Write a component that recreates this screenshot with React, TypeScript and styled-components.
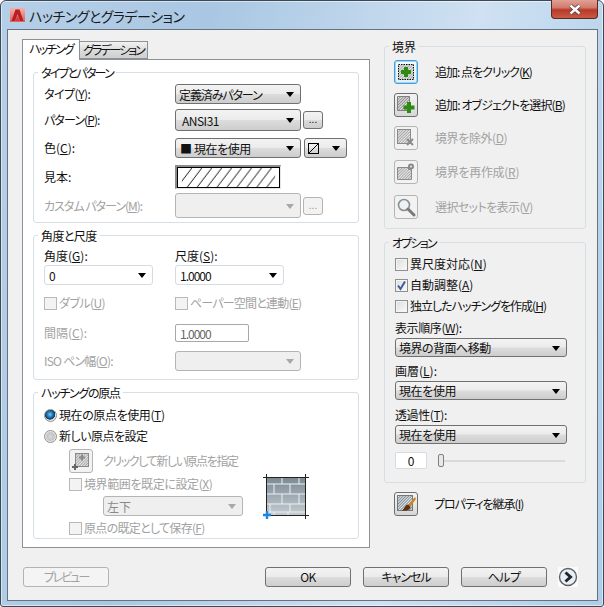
import React from 'react';
import styled, { createGlobalStyle, css } from 'styled-components';

const GlobalStyle = createGlobalStyle`
  html, body { margin: 0; padding: 0; background: #fff; }
  body {
    font-family: "Noto Sans CJK JP", "Liberation Sans", sans-serif;
    font-size: 12px;
    font-feature-settings: "palt";
    color: #111;
  }
  u { text-underline-offset: 1px; }
`;

// kana in the reference font run narrower, so most texts carry their own tracking
const tracking = css<{ $ls?: number }>`
  letter-spacing: ${(p) => p.$ls ?? 0}px;
`;

const Frame = styled.div`
  width: 604px;
  height: 607px;
  box-sizing: border-box;
  border: 1px solid #3c4a58;
  border-radius: 6px 6px 3px 3px;
  padding: 0 5px 5px 6px;
  background: linear-gradient(100deg, #b6cfe8 0%, #a9c7e3 30%, #cfe1f2 68%, #adcde8 100%);
  box-shadow: inset 0 0 0 1px rgba(255, 255, 255, 0.5);
`;

const TitleBar = styled.div`
  height: 28px;
  display: flex;
  align-items: flex-start;
`;

const TitleIcon = styled.svg`
  margin: 7px 4px 0 3px;
`;

const TitleText = styled.div`
  font-size: 14px;
  line-height: 18px;
  letter-spacing: -0.5px;
  margin-top: 6px;
  color: #1a1a1a;
  flex: 1;
`;

const CloseButton = styled.div`
  width: 47px;
  height: 19px;
  margin-top: -1px;
  box-sizing: border-box;
  border: 1px solid #5a2a24;
  border-top: none;
  border-radius: 0 0 4px 4px;
  background: linear-gradient(#e0a196 0%, #d27a6c 42%, #b8392a 55%, #c95c44 100%);
  display: flex;
  align-items: center;
  justify-content: center;
`;

const Client = styled.div`
  height: 572px;
  box-sizing: border-box;
  border: 1px solid #66727e;
  background: #f0f0f0;
  padding: 9px 0 0 14px;
`;

const Columns = styled.div`
  display: flex;
  align-items: flex-start;
`;

const LeftColumn = styled.div`
  width: 348px;
`;

const RightColumn = styled.div`
  width: 202px;
  margin: 7px 0 0 14px;
`;

const Tabs = styled.div`
  display: flex;
  align-items: flex-end;
  height: 21px;
  margin-bottom: -1px;
  position: relative;
`;

const Tab = styled.div<{ $active?: boolean; $ls?: number }>`
  ${tracking}
  box-sizing: border-box;
  border: 1px solid #8a9199;
  text-align: center;
  white-space: nowrap;
  ${(p) =>
    p.$active
      ? css`
          width: 58px;
          height: 21px;
          line-height: 17px;
          background: #fff;
          border-bottom: none;
        `
      : css`
          width: 68px;
          height: 18px;
          line-height: 16px;
          margin-bottom: 1px;
          border-left: none;
          background: linear-gradient(#f2f2f2, #dcdcdc 50%, #cfcfcf);
        `}
`;

const TabPanel = styled.div`
  box-sizing: border-box;
  border: 1px solid #8a9199;
  background: #fff;
  padding: 12px 10px 8px;
`;

const Group = styled.div<{ $mt?: number; $pb?: number }>`
  border: 1px solid #d5dfe5;
  border-radius: 3px;
  margin-top: ${(p) => p.$mt ?? 0}px;
  padding: 0 10px ${(p) => p.$pb ?? 0}px;
`;

const Legend = styled.div<{ $ls?: number }>`
  ${tracking}
  width: fit-content;
  height: 16px;
  line-height: 16px;
  margin: -8px 0 0 -6px;
  padding: 0 3px 0 3px;
  background: #fff;
`;

const RightLegend = styled(Legend)`
  background: #f0f0f0;
`;

const Row = styled.div<{ $h: number; $mt?: number; $gap?: number }>`
  display: flex;
  align-items: center;
  height: ${(p) => p.$h}px;
  margin-top: ${(p) => p.$mt ?? 0}px;
  gap: ${(p) => p.$gap ?? 0}px;
`;

const Label = styled.div<{ $w?: number; $off?: boolean; $ls?: number }>`
  ${tracking}
  width: ${(p) => (p.$w ? `${p.$w}px` : 'auto')};
  white-space: nowrap;
  line-height: 16px;
  color: ${(p) => (p.$off ? '#a2a2a2' : '#111')};
`;

const CheckCell = styled.div<{ $w: number }>`
  display: flex;
  align-items: center;
  width: ${(p) => p.$w}px;
`;

const Select = styled.div<{
  $w: number;
  $off?: boolean;
  $white?: boolean;
  $pl?: number;
  $ml?: number;
  $ls?: number;
}>`
  ${tracking}
  position: relative;
  width: ${(p) => p.$w}px;
  height: 100%;
  margin-left: ${(p) => p.$ml ?? 0}px;
  box-sizing: border-box;
  border: 1px solid ${(p) => (p.$off ? '#b4b4b4' : '#707070')};
  border-radius: 3px;
  padding: 0 0 0 ${(p) => p.$pl ?? 3}px;
  display: flex;
  align-items: center;
  white-space: nowrap;
  background: ${(p) =>
    p.$off ? '#efefef' : 'linear-gradient(#f3f3f3, #ebebeb 48%, #dcdcdc 52%, #cdcdcd)'};
  color: ${(p) => (p.$off ? '#8a8a8a' : '#111')};
  ${(p) =>
    p.$white &&
    css`
      border-color: #d4dbe2;
      background: #fff;
    `}
  &::after {
    content: '';
    position: absolute;
    right: 6px;
    top: 50%;
    margin-top: -2px;
    border-left: 4px solid transparent;
    border-right: 4px solid transparent;
    border-top: 5px solid ${(p) => (p.$off ? '#a8a8a8' : '#000')};
  }
`;

const SmallButton = styled.div<{ $off?: boolean }>`
  width: 20px;
  height: 18px;
  margin-left: 2px;
  box-sizing: border-box;
  border: 1px solid ${(p) => (p.$off ? '#b4b4b4' : '#707070')};
  border-radius: 3px;
  background: ${(p) =>
    p.$off ? '#f2f2f2' : 'linear-gradient(#f3f3f3, #ebebeb 48%, #dcdcdc 52%, #cdcdcd)'};
  color: ${(p) => (p.$off ? '#999' : '#111')};
  text-align: center;
  font-size: 10px;
  line-height: 14px;
`;

const TextInput = styled.div<{ $w: number; $off?: boolean; $center?: boolean; $ls?: number }>`
  ${tracking}
  width: ${(p) => p.$w}px;
  height: 100%;
  box-sizing: border-box;
  border: 1px solid ${(p) => (p.$off ? '#a8a8a8' : '#d4dbe2')};
  border-radius: 2px;
  background: #fff;
  padding: 0 4px;
  display: flex;
  align-items: center;
  justify-content: ${(p) => (p.$center ? 'center' : 'flex-start')};
  color: ${(p) => (p.$off ? '#666' : '#111')};
`;

const BoxMark = styled.div<{ $off?: boolean }>`
  width: 13px;
  height: 13px;
  box-sizing: border-box;
  flex: none;
  margin-right: 2px;
  border: 1px solid ${(p) => (p.$off ? '#b8b8b8' : '#8e8f8f')};
  background: ${(p) => (p.$off ? '#f3f3f3' : 'linear-gradient(135deg, #dcdcdc, #fbfbfb)')};
  box-shadow: inset 0 0 0 1px #f4f4f4;
  display: flex;
  align-items: center;
  justify-content: center;
`;

const RadioMark = styled.div<{ $on?: boolean }>`
  width: 13px;
  height: 13px;
  box-sizing: border-box;
  flex: none;
  margin-right: 2px;
  border-radius: 50%;
  border: 1px solid #8e8f8f;
  background: ${(p) =>
    p.$on
      ? 'radial-gradient(circle at 45% 40%, #7cc4f0 0, #1a6fb0 35%, #10395e 55%, #e8e8e8 62%)'
      : 'radial-gradient(circle, #d8d8d8 0, #c4c4c4 50%, #f0f0f0 70%)'};
`;

const Sample = styled.div`
  width: 106px;
  height: 24px;
  box-sizing: border-box;
  border-top: 2px solid #8c8c8c;
  border-left: 2px solid #8c8c8c;
  border-right: 1px solid #e4e4e4;
  border-bottom: 1px solid #e4e4e4;
`;

const SampleInner = styled.svg`
  display: block;
  width: 103px;
  height: 21px;
  border: 1px solid #000;
  box-sizing: border-box;
`;

const OriginArea = styled.div`
  display: flex;
  align-items: flex-start;
  margin-left: 25px;
`;

const OriginControls = styled.div`
  width: 174px;
`;

const OriginPreview = styled.svg`
  flex: none;
  margin: 29px 0 0 20px;
`;

const Indented = styled(Row)`
  padding-left: 34px;
`;

const IconButton = styled.div<{ $off?: boolean; $focus?: boolean }>`
  width: 24px;
  height: 24px;
  flex: none;
  box-sizing: border-box;
  border: 1px solid ${(p) => (p.$off ? '#b4b4b4' : '#6e6e6e')};
  border-radius: 3px;
  background: ${(p) => (p.$off ? '#f2f2f2' : 'linear-gradient(#f3f3f3, #e8e8e8 50%, #d6d6d6)')};
  display: flex;
  align-items: center;
  justify-content: center;
  ${(p) =>
    p.$focus &&
    css`
      border-color: #3c9fe0;
      box-shadow: inset 0 0 0 1px #9fd4f4;
      background: linear-gradient(#f6fbff, #e4eef6);
    `}
`;

const BoundaryRows = styled.div`
  margin: 5px 0 0 -1px;
  padding-bottom: 9px;
`;

const Slider = styled.div`
  position: relative;
  width: 127px;
  height: 2px;
  margin-left: 11px;
  background: #d8dcd8;
`;

const SliderThumb = styled.div`
  position: absolute;
  left: 0;
  top: -6px;
  width: 6px;
  height: 13px;
  box-sizing: border-box;
  border: 1px solid #808080;
  border-radius: 2px;
  background: #e8e8e8;
`;

const InheritRow = styled(Row)`
  margin-left: 10px;
`;

const Footer = styled.div`
  display: flex;
  align-items: center;
  height: 20px;
  margin: 19px 0 0 1px;
`;

const PushButton = styled.div<{ $off?: boolean; $ml?: number; $ls?: number }>`
  ${tracking}
  width: 86px;
  height: 20px;
  margin-left: ${(p) => p.$ml ?? 0}px;
  box-sizing: border-box;
  border: 1px solid ${(p) => (p.$off ? '#b4b4b4' : '#707070')};
  border-radius: 3px;
  text-align: center;
  line-height: 17px;
  color: ${(p) => (p.$off ? '#a2a2a2' : '#111')};
  background: ${(p) =>
    p.$off ? '#f4f4f4' : 'linear-gradient(#f3f3f3, #ebebeb 48%, #dcdcdc 52%, #cdcdcd)'};
`;

const MoreButton = styled.svg`
  margin-left: 11px;
  flex: none;
  background: #fbfbfb;
`;

const U = ({ children }: { children: React.ReactNode }) => <u>{children}</u>;

function Check({
  label,
  off,
  on,
  ls,
}: {
  label: React.ReactNode;
  off?: boolean;
  on?: boolean;
  ls?: number;
}) {
  return (
    <>
      <BoxMark $off={off}>
        {on && (
          <svg width="11" height="11" viewBox="0 0 11 11">
            <path d="M2 5.5 L4.5 9 L9 1.5" fill="none" stroke="#3f5b9e" strokeWidth="2" />
          </svg>
        )}
      </BoxMark>
      <Label $off={off} $ls={ls}>
        {label}
      </Label>
    </>
  );
}

function HatchDefs({ id, color }: { id: string; color: string }) {
  return (
    <defs>
      <pattern id={id} width="2" height="2" patternUnits="userSpaceOnUse" patternTransform="rotate(45)">
        <rect width="2" height="2" fill="#e8e8e8" />
        <rect width="1" height="2" fill={color} />
      </pattern>
    </defs>
  );
}

function AddPickIcon() {
  return (
    <svg width="18" height="18" viewBox="0 0 18 18">
      <HatchDefs id="h-pick" color="#a4b0a4" />
      <rect x="1.5" y="1.5" width="15" height="15" fill="url(#h-pick)" stroke="#111" strokeDasharray="1.5 1" />
      <path d="M7 4h4v3h3v4h-3v3H7v-3H4V7h3z" fill="#2f8a12" />
    </svg>
  );
}

function AddObjectIcon() {
  return (
    <svg width="20" height="20" viewBox="0 0 20 20">
      <HatchDefs id="h-obj" color="#8c8c8c" />
      <path d="M1.5 1.5h12v14h-12z" fill="url(#h-obj)" stroke="#808080" />
      <path d="M11 7h4v3.5h3.5v4H15V18h-4v-3.5H7.5v-4H11z" fill="#2f8a12" />
    </svg>
  );
}

function ExcludeIcon() {
  return (
    <svg width="20" height="20" viewBox="0 0 20 20">
      <HatchDefs id="h-exc" color="#a8a8a8" />
      <rect x="1.5" y="1.5" width="13" height="14" fill="url(#h-exc)" stroke="#8a8a8a" />
      <path d="M11 11l6 6M17 11l-6 6" stroke="#8a8a8a" strokeWidth="2" />
    </svg>
  );
}

function RecreateIcon() {
  return (
    <svg width="20" height="20" viewBox="0 0 20 20">
      <HatchDefs id="h-rec" color="#a8a8a8" />
      <path d="M1.5 5.5h11v2h3v10h-14z" fill="url(#h-rec)" stroke="#8a8a8a" />
      <circle cx="15" cy="4.5" r="3" fill="#8a8a8a" />
      <circle cx="15" cy="4.5" r="1" fill="#eee" />
    </svg>
  );
}

function MagnifierIcon() {
  return (
    <svg width="20" height="20" viewBox="0 0 20 20">
      <circle cx="8" cy="8" r="5.5" fill="#eef2f4" stroke="#8a8f92" strokeWidth="1.6" />
      <path d="M12 12l6 6" stroke="#7a7a7a" strokeWidth="3" strokeLinecap="round" />
    </svg>
  );
}

function BrushIcon() {
  return (
    <svg width="20" height="20" viewBox="0 0 20 20">
      <HatchDefs id="h-brush" color="#7c8e98" />
      <rect x="1.5" y="1.5" width="15" height="15" fill="url(#h-brush)" stroke="#777" />
      <path d="M19 3 L12 11 L14 13 L20 5z" fill="#c9861c" />
      <path d="M12 10.5 C9 11 9 14 6 16.5 C10 17.5 14 16 14.5 13z" fill="#5e2f12" />
    </svg>
  );
}

function OriginPickIcon() {
  return (
    <svg width="20" height="20" viewBox="0 0 20 20">
      <HatchDefs id="h-org" color="#a8a8a8" />
      <rect x="4.5" y="2.5" width="13" height="13" fill="url(#h-org)" stroke="#8a8a8a" />
      <path d="M10 3.5h2v2h2v2h-2v2h-2v-2H8v-2h2z" fill="#8a8a8a" />
      <path d="M3 13h2v2h2v2H5v2H3v-2H1v-2h2z" fill="#666" />
    </svg>
  );
}

function App() {
  return (
    <>
      <GlobalStyle />
      <Frame>
        <TitleBar>
          <TitleIcon width="15" height="14" viewBox="0 0 15 14">
            <defs>
              <linearGradient id="logo-bg" x1="0" y1="0" x2="0" y2="1">
                <stop offset="0" stopColor="#f2b2ac" />
                <stop offset="1" stopColor="#e0605a" />
              </linearGradient>
            </defs>
            <rect width="15" height="14" fill="url(#logo-bg)" />
            <path d="M1.5 13 L5.5 1.5 H9.5 L13.5 13 H10 L7.5 6 L5 13z" fill="#b81e22" />
            <path d="M5.5 13 L7.5 7.5 L9.5 13z" fill="#d23c3c" />
          </TitleIcon>
          <TitleText>ハッチングとグラデーション</TitleText>
          <CloseButton>
            <svg width="14" height="11" viewBox="0 0 14 11">
              <path d="M2.5 1.5l9 8M11.5 1.5l-9 8" stroke="#4a3a38" strokeWidth="3.8" />
              <path d="M2.5 1.5l9 8M11.5 1.5l-9 8" stroke="#fff" strokeWidth="2.4" />
            </svg>
          </CloseButton>
        </TitleBar>

        <Client>
          <Columns>
            <LeftColumn>
              <Tabs>
                <Tab $active $ls={-2}>ハッチング</Tab>
                <Tab $ls={-2}>グラデーション</Tab>
              </Tabs>
              <TabPanel>
                <Group $pb={4}>
                  <Legend $ls={-1.8}>タイプとパターン</Legend>
                  <Row $h={20} $mt={3}>
                    <Label $w={131} $ls={-0.5}>タイプ(<U>Y</U>):</Label>
                    <Select $w={126} $ls={-1.1}>定義済みパターン</Select>
                  </Row>
                  <Row $h={22} $mt={5}>
                    <Label $w={131} $ls={-0.9}>パターン(<U>P</U>):</Label>
                    <Select $w={126} $pl={6} $ls={-0.5}>ANSI31</Select>
                    <SmallButton>...</SmallButton>
                  </Row>
                  <Row $h={20} $mt={7}>
                    <Label $w={131}>色(<U>C</U>):</Label>
                    <Select $w={126} $pl={4} $ls={-0.4}>■ 現在を使用</Select>
                    <Select $w={43} $ml={3}>
                      <svg width="11" height="11" viewBox="0 0 11 11">
                        <rect x="0.5" y="0.5" width="10" height="10" fill="none" stroke="#000" />
                        <path d="M0.5 10.5L10.5 0.5" stroke="#000" />
                      </svg>
                    </Select>
                  </Row>
                  <Row $h={24} $mt={7}>
                    <Label $w={131}>見本:</Label>
                    <Sample>
                      <SampleInner viewBox="0 0 103 21">
                        <defs>
                          <pattern id="ansi" width="11" height="21" patternUnits="userSpaceOnUse">
                            <path d="M-5 21L11 0M6 21L22 0" stroke="#000" strokeWidth="1" />
                          </pattern>
                        </defs>
                        <rect width="103" height="21" fill="url(#ansi)" />
                      </SampleInner>
                    </Sample>
                  </Row>
                  <Row $h={25} $mt={4}>
                    <Label $w={131} $off $ls={-1}>カスタム パターン(<U>M</U>):</Label>
                    <Select $w={126} $off />
                    <SmallButton $off>...</SmallButton>
                  </Row>
                </Group>

                <Group $mt={12} $pb={8}>
                  <Legend $ls={-0.6}>角度と尺度</Legend>
                  <Row $h={18} $mt={3}>
                    <Label $w={131}>角度(<U>G</U>):</Label>
                    <Label>尺度(<U>S</U>):</Label>
                  </Row>
                  <Row $h={20}>
                    <Select $w={109} $white $pl={4}>0</Select>
                    <Select $w={109} $white $ml={22} $pl={4} $ls={-1}>1.0000</Select>
                  </Row>
                  <Row $h={18} $mt={9}>
                    <CheckCell $w={131}>
                      <Check off ls={-0.6} label={<>ダブル(<U>U</U>)</>} />
                    </CheckCell>
                    <CheckCell $w={140}>
                      <Check off ls={-0.8} label={<>ペーパー空間と連動(<U>E</U>)</>} />
                    </CheckCell>
                  </Row>
                  <Row $h={18} $mt={12}>
                    <Label $w={131} $off>間隔(<U>C</U>):</Label>
                    <TextInput $w={74} $off $ls={-1}>1.0000</TextInput>
                  </Row>
                  <Row $h={20} $mt={9}>
                    <Label $w={131} $off $ls={-0.8}>ISO ペン幅(<U>O</U>):</Label>
                    <Select $w={126} $off />
                  </Row>
                </Group>

                <Group $mt={12} $pb={1}>
                  <Legend $ls={-1.3}>ハッチングの原点</Legend>
                  <Row $h={18} $mt={5}>
                    <RadioMark $on />
                    <Label $ls={-0.4}>現在の原点を使用(<U>T</U>)</Label>
                  </Row>
                  <Row $h={18} $mt={3}>
                    <RadioMark />
                    <Label $ls={-0.5}>新しい原点を設定</Label>
                  </Row>
                  <OriginArea>
                    <OriginControls>
                      <Row $h={25} $mt={3} $gap={10}>
                        <IconButton $off>
                          <OriginPickIcon />
                        </IconButton>
                        <Label $off $ls={-1.4}>クリックして新しい原点を指定</Label>
                      </Row>
                      <Row $h={18} $mt={2}>
                        <Check off ls={-0.4} label={<>境界範囲を既定に設定(<U>X</U>)</>} />
                      </Row>
                      <Indented $h={20} $mt={3}>
                        <Select $w={140} $off>左下</Select>
                      </Indented>
                      <Row $h={18} $mt={3}>
                        <Check off ls={-0.7} label={<>原点の既定として保存(<U>F</U>)</>} />
                      </Row>
                    </OriginControls>
                    <OriginPreview width="46" height="46" viewBox="0 0 46 46">
                      <defs>
                        <linearGradient id="brick" x1="0" y1="0" x2="0" y2="1">
                          <stop offset="0" stopColor="#7c8a94" />
                          <stop offset="1" stopColor="#c4ccd2" />
                        </linearGradient>
                      </defs>
                      <rect x="4" y="4" width="38" height="37" fill="url(#brick)" />
                      <path
                        d="M4 10h38M4 20h38M4 30h38M4 38h38M19 4v6M36 4v6M11 10v10M27 10v10M19 20v10M36 20v10M7 30v8M27 30v8M11 38v3M25 38v3"
                        stroke="#eef1f3"
                        fill="none"
                      />
                      <path d="M3.5 0v41M42.5 0v45M0 3.5h46M3.5 41.5H46" stroke="#222" fill="none" />
                      <path d="M4 37v8M0 41h8" stroke="#1a86e0" strokeWidth="2.4" />
                    </OriginPreview>
                  </OriginArea>
                </Group>
              </TabPanel>
            </LeftColumn>

            <RightColumn>
              <Group>
                <RightLegend>境界</RightLegend>
                <BoundaryRows>
                  <Row $h={24} $gap={17}>
                    <IconButton $focus><AddPickIcon /></IconButton>
                    <Label $ls={-1}>追加:&nbsp;点をクリック(<U>K</U>)</Label>
                  </Row>
                  <Row $h={24} $mt={9} $gap={17}>
                    <IconButton><AddObjectIcon /></IconButton>
                    <Label $ls={-0.9}>追加:&nbsp;オブジェクトを選択(<U>B</U>)</Label>
                  </Row>
                  <Row $h={24} $mt={9} $gap={17}>
                    <IconButton $off><ExcludeIcon /></IconButton>
                    <Label $off $ls={-0.4}>境界を除外(<U>D</U>)</Label>
                  </Row>
                  <Row $h={24} $mt={10} $gap={17}>
                    <IconButton $off><RecreateIcon /></IconButton>
                    <Label $off $ls={-0.3}>境界を再作成(<U>R</U>)</Label>
                  </Row>
                  <Row $h={24} $mt={11} $gap={17}>
                    <IconButton $off><MagnifierIcon /></IconButton>
                    <Label $off $ls={-0.6}>選択セットを表示(<U>V</U>)</Label>
                  </Row>
                </BoundaryRows>
              </Group>

              <Group $mt={13} $pb={13}>
                <RightLegend $ls={-1.8}>オプション</RightLegend>
                <Row $h={18} $mt={4}>
                  <Check label={<>異尺度対応(<U>N</U>)</>} />
                </Row>
                <Row $h={18} $mt={3}>
                  <Check on label={<>自動調整(<U>A</U>)</>} />
                </Row>
                <Row $h={18} $mt={3}>
                  <Check ls={-1} label={<>独立したハッチングを作成(<U>H</U>)</>} />
                </Row>
                <Row $h={18} $mt={4}>
                  <Label $ls={-0.4}>表示順序(<U>W</U>):</Label>
                </Row>
                <Row $h={19} $mt={1}>
                  <Select $w={172} $ls={-0.5}>境界の背面へ移動</Select>
                </Row>
                <Row $h={18} $mt={5}>
                  <Label>画層(<U>L</U>):</Label>
                </Row>
                <Row $h={19} $mt={1}>
                  <Select $w={172} $ls={-0.4}>現在を使用</Select>
                </Row>
                <Row $h={18} $mt={6}>
                  <Label $ls={-0.4}>透過性(<U>T</U>):</Label>
                </Row>
                <Row $h={19} $mt={1}>
                  <Select $w={172} $ls={-0.4}>現在を使用</Select>
                </Row>
                <Row $h={17} $mt={8}>
                  <TextInput $w={32} $center>0</TextInput>
                  <Slider>
                    <SliderThumb />
                  </Slider>
                </Row>
              </Group>

              <InheritRow $h={24} $mt={9} $gap={16}>
                <IconButton><BrushIcon /></IconButton>
                <Label $ls={-1}>プロパティを継承(<U>I</U>)</Label>
              </InheritRow>
            </RightColumn>
          </Columns>

          <Footer>
            <PushButton $off $ls={-2}>プレビュー</PushButton>
            <PushButton $ml={156} $ls={-0.5}>OK</PushButton>
            <PushButton $ml={12} $ls={-1}>キャンセル</PushButton>
            <PushButton $ml={12} $ls={-0.5}>ヘルプ</PushButton>
            <MoreButton width="20" height="20" viewBox="0 0 20 20">
              <circle cx="10" cy="10" r="8.5" fill="#eceff2" stroke="#59626a" strokeWidth="1.4" />
              <path d="M7.5 5.5L12.5 10L7.5 14.5" fill="none" stroke="#1d2730" strokeWidth="3" />
            </MoreButton>
          </Footer>
        </Client>
      </Frame>
    </>
  );
}

export default App;
